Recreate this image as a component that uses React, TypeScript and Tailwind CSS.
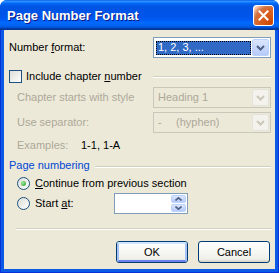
import React from "react";

const Chevron = ({ color }: { color: string }) => (
  <svg width="9" height="6" viewBox="0 0 9 6">
    <path d="M1 1 L4.5 4.5 L8 1" stroke={color} strokeWidth="2" fill="none" />
  </svg>
);

function Combo({
  children,
  disabled,
}: {
  children: React.ReactNode;
  disabled?: boolean;
}) {
  return (
    <div
      className={`h-[21px] w-[118px] border flex items-stretch p-[1px] ${
        disabled ? "border-[#C9C7BA] bg-[#ECE9D8]" : "border-[#7F9DB9] bg-white"
      }`}
    >
      <div className="flex-1 flex items-center pl-[1px] pr-[1px] overflow-hidden">{children}</div>
      <div
        className={`w-[17px] rounded-[2px] border flex items-center justify-center ${
          disabled
            ? "border-[#E4E3DA] bg-[#F3F2EC]"
            : "border-[#BAD1FC] bg-[linear-gradient(#DCE6FD,#B6CAF9)]"
        }`}
      >
        <Chevron color={disabled ? "#C9C7BA" : "#4D6185"} />
      </div>
    </div>
  );
}

const Checkbox = () => (
  <div className="w-[13px] h-[13px] border border-[#1C5180] bg-[linear-gradient(135deg,#DCDCD7,#FFFFFF)]" />
);

const Radio = ({ checked }: { checked?: boolean }) => (
  <div className="w-[13px] h-[13px] rounded-full border border-[#1C5180] bg-[linear-gradient(135deg,#DCDCD7,#FFFFFF)] flex items-center justify-center">
    {checked && (
      <div className="w-[5px] h-[5px] rounded-full bg-[radial-gradient(circle_at_35%_35%,#9EE89E,#21A121)]" />
    )}
  </div>
);

const Etched = ({ className = "" }: { className?: string }) => (
  <div className={`h-[2px] border-t border-t-[#D0D0BF] border-b border-b-white ${className}`} />
);

function Button({ children, def }: { children: React.ReactNode; def?: boolean }) {
  return (
    <div className="w-[72px] h-[22px] rounded-[3px] border border-[#003C74] bg-[linear-gradient(#FFFFFF,#F0F0EA_85%,#D6D0C5)] flex items-center justify-center relative">
      {def && (
        <div className="absolute inset-0 rounded-[2px] border-2 border-[#A9C3F5] border-t-[#CEE7FF] border-b-[#6982EE]" />
      )}
      <span className="relative text-black">{children}</span>
    </div>
  );
}

export default function App() {
  return (
    <div className="w-[279px] h-[273px] bg-white font-['Liberation_Sans',Arial,sans-serif] text-[11px] leading-[13px] text-black">
      <div className="w-full h-full flex flex-col rounded-t-[7px] overflow-hidden bg-[#0A5AE6]">
        {/* Title bar */}
        <div className="h-[30px] shrink-0 flex items-center pl-[7px] pr-[5px] bg-[linear-gradient(to_bottom,#0058EE_0%,#3593FF_4%,#288EFF_6%,#127DFF_8%,#036FFC_10%,#0262EE_14%,#0057E5_20%,#0054E3_24%,#0055EB_56%,#005BF5_66%,#026AFE_76%,#0062EF_86%,#0052D6_92%,#0040AB_94%,#003092_100%)]">
          <span className="flex-1 text-white font-bold text-[13px] [text-shadow:1px_1px_0_#0A1883] pt-[1px]">
            Page Number Format
          </span>
          <div className="w-[21px] h-[21px] rounded-[3px] border border-white bg-[radial-gradient(circle_at_90%_90%,#CC4600_0%,#DC6527_55%,#CD7546_70%,#FFCCB2_90%,#FFFFFF_100%)] flex items-center justify-center">
            <svg width="11" height="11" viewBox="0 0 11 11">
              <path d="M1.5 1.5 L9.5 9.5 M9.5 1.5 L1.5 9.5" stroke="white" strokeWidth="2" strokeLinecap="square" />
            </svg>
          </div>
        </div>

        {/* Frame */}
        <div className="flex-1 flex px-[4px] pb-[4px] shadow-[inset_1px_0_0_#0831D9,inset_-1px_0_0_#0831D9,inset_0_-1px_0_#0831D9]">
          <div className="flex-1 bg-[#ECE9D8] flex flex-col">
            {/* Row 1 */}
            <div className="mt-[7px] flex items-center pl-[5px]">
              <div className="w-[144px]">
                Number <span className="underline">f</span>ormat:
              </div>
              <Combo>
                <div className="h-[14px] flex-1 bg-[#316AC5] text-white flex items-center px-[2px] outline outline-1 outline-dotted outline-[#000] -outline-offset-1">
                  1, 2, 3, ...
                </div>
              </Combo>
            </div>

            {/* Row 2 */}
            <div className="mt-[12px] h-[13px] flex items-center pl-[5px]">
              <div className="w-[144px] flex items-center gap-[4px]">
                <Checkbox />
                <span>
                  Include chapter <span className="underline">n</span>umber
                </span>
              </div>
              <Etched className="w-[118px]" />
            </div>

            {/* Row 3 */}
            <div className="mt-[4px] flex items-center pl-[5px]">
              <div className="w-[144px] pl-[8px] text-[#ACA899]">Chapter starts with style</div>
              <Combo disabled>
                <span className="pl-[2px] text-[#ACA899]">Heading 1</span>
              </Combo>
            </div>

            {/* Row 4 */}
            <div className="mt-[4px] flex items-center pl-[5px]">
              <div className="w-[144px] pl-[8px] text-[#ACA899]">Use separator:</div>
              <Combo disabled>
                <span className="pl-[2px] text-[#ACA899] flex">
                  <span className="w-[18px]">-</span>
                  <span>(hyphen)</span>
                </span>
              </Combo>
            </div>

            {/* Row 5 */}
            <div className="mt-[6px] flex items-center pl-[13px]">
              <span className="w-[64px] text-[#ACA899]">Examples:</span>
              <span>1-1, 1-A</span>
            </div>

            {/* Row 6 */}
            <div className="mt-[7px] flex items-center pl-[5px] pr-[4px] gap-[5px]">
              <span className="text-[#0046D5]">Page numbering</span>
              <Etched className="flex-1 mt-[3px]" />
            </div>

            {/* Row 7 */}
            <div className="mt-[5px] h-[13px] flex items-center pl-[13px] gap-[5px]">
              <Radio checked />
              <span>
                <span className="underline">C</span>ontinue from previous section
              </span>
            </div>

            {/* Row 8 */}
            <div className="mt-[3px] flex items-center pl-[13px]">
              <div className="w-[97px] flex items-center gap-[5px]">
                <Radio />
                <span>
                  Start <span className="underline">a</span>t:
                </span>
              </div>
              <div className="w-[74px] h-[21px] border border-[#7F9DB9] bg-white flex justify-end p-[1px]">
                <div className="w-[15px] flex flex-col gap-[1px]">
                  <div className="flex-1 rounded-[2px] border border-[#BAD1FC] bg-[linear-gradient(#DCE6FD,#B6CAF9)] flex items-center justify-center">
                    <svg width="7" height="4" viewBox="0 0 7 4">
                      <path d="M0.5 3.5 L3.5 0.8 L6.5 3.5" stroke="#4D6185" strokeWidth="1.6" fill="none" />
                    </svg>
                  </div>
                  <div className="flex-1 rounded-[2px] border border-[#BAD1FC] bg-[linear-gradient(#DCE6FD,#B6CAF9)] flex items-center justify-center">
                    <svg width="7" height="4" viewBox="0 0 7 4">
                      <path d="M0.5 0.5 L3.5 3.2 L6.5 0.5" stroke="#4D6185" strokeWidth="1.6" fill="none" />
                    </svg>
                  </div>
                </div>
              </div>
            </div>

            {/* Separator */}
            <div className="mt-[14px] pl-[12px] pr-[3px]">
              <Etched />
            </div>

            {/* Buttons */}
            <div className="mt-[11px] flex justify-end gap-[10px] pr-[5px]">
              <Button def>OK</Button>
              <Button>Cancel</Button>
            </div>
          </div>
        </div>
      </div>
    </div>
  );
}
